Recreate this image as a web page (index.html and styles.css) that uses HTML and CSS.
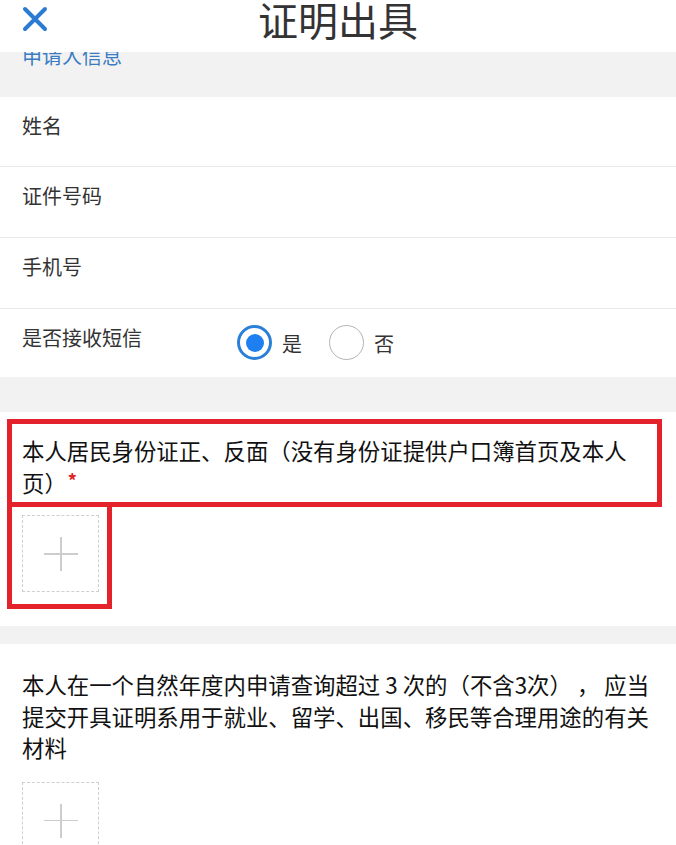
FILE: index.html
```html
<!DOCTYPE html>
<html lang="zh-CN">
<head>
    <meta charset="UTF-8">
    <meta name="viewport" content="width=device-width, initial-scale=1.0">
    <title>证明出具</title>
    <link rel="stylesheet" href="styles.css">
</head>
<body>
    <div class="header">
        <div class="close">
            <svg width="26" height="26" viewBox="0 0 26 26">
                <path d="M3 3 L23 23 M23 3 L3 23" stroke="#2b7bd3" stroke-width="4" stroke-linecap="round" fill="none"/>
            </svg>
        </div>
        <h1>证明出具</h1>
        <div></div>
    </div>

    <!-- Applicant info -->
    <div class="group-title">
        <span>申请人信息</span>
    </div>
    <div class="form-list">
        <div class="row"><span class="label">姓名</span></div>
        <div class="row"><span class="label">证件号码</span></div>
        <div class="row"><span class="label">手机号</span></div>
        <div class="row row-last">
            <span class="label">是否接收短信</span>
            <div class="radios">
                <span class="radio checked"></span><span class="radio-text">是</span>
                <span class="radio"></span><span class="radio-text">否</span>
            </div>
        </div>
    </div>

    <div class="gap gap-large"></div>

    <!-- ID card upload -->
    <div class="section">
        <p class="section-text">本人居民身份证正、反面（没有身份证提供户口簿首页及本人页）<span class="required">*</span></p>
        <div class="upload"><span class="plus"></span></div>
        <div class="mark mark-text"></div>
        <div class="mark mark-upload"></div>
    </div>

    <div class="gap"></div>

    <!-- Extra material -->
    <div class="section section-extra">
        <p class="section-text">本人在一个自然年度内申请查询超过 3 次的（不含3次）&nbsp;，&nbsp;应当提交开具证明系用于就业、留学、出国、移民等合理用途的有关材料</p>
        <div class="upload"><span class="plus"></span></div>
    </div>
</body>
</html>
```

FILE: styles.css
```css
/* Global Styles */
body {
    font-family: "Noto Sans CJK SC", "Noto Sans", sans-serif;
    margin: 0;
    padding: 0;
    background-color: #f2f2f2;
    color: #333;
    height: 845px;
    overflow: hidden;
}

/* Header */
.header {
    display: grid;
    grid-template-columns: 1fr auto 1fr;
    height: 52px;
    background-color: #fff;
}

.close {
    padding: 6px 0 0 22px;
}

.close svg {
    display: block;
}

.header h1 {
    margin: 0;
    font-size: 40px;
    font-weight: normal;
    line-height: 44px;
    color: #333;
    margin-top: -3px;
}

/* Group title, scrolled under the header */
.group-title {
    height: 45px;
    overflow: hidden;
    padding-left: 22px;
}

.group-title span {
    display: block;
    margin-top: -6px;
    font-size: 20px;
    line-height: 20px;
    color: #3a7cc2;
}

/* Form rows */
.form-list {
    background-color: #fff;
}

.row {
    display: flex;
    align-items: flex-start;
    height: 70px;
    border-bottom: 1px solid #e9e9e9;
    padding-left: 22px;
    box-sizing: border-box;
}

.row + .row {
    height: 71px;
}

.row.row-last {
    height: 68px;
    border-bottom: none;
}

.label {
    padding-top: 19px;
    width: 215px;
    font-size: 20px;
    line-height: 20px;
    color: #333;
}

.radios {
    display: flex;
    align-items: center;
    margin-top: 16px;
}

.radio {
    width: 35px;
    height: 35px;
    border: 1.5px solid #b4b4b4;
    border-radius: 50%;
    box-sizing: border-box;
    display: flex;
    align-items: center;
    justify-content: center;
}

.radio.checked {
    border: 3px solid #2a7fd8;
}

.radio.checked::after {
    content: "";
    width: 18px;
    height: 18px;
    border-radius: 50%;
    background-color: #1e80f0;
}

.radio-text {
    margin: 3px 27px 0 10px;
    font-size: 20px;
    line-height: 20px;
}

/* Gray spacers */
.gap {
    height: 18px;
}

.gap-large {
    height: 35px;
}

/* Upload sections */
.section {
    position: relative;
    background-color: #fff;
    padding: 23px 22px 34px 22px;
}

.section-extra {
    padding-top: 25px;
    height: 200px;
}

.section-text {
    margin: 0;
    font-size: 22.4px;
    line-height: 31.5px;
    color: #111;
}

.required {
    margin-left: 1px;
    color: #e02323;
    font-size: 18px;
    font-weight: bold;
    line-height: 18px;
    vertical-align: 4px;
}

.upload {
    position: relative;
    width: 77px;
    height: 77px;
    margin-top: 17px;
    border: 1px dashed #cfcfcf;
    box-sizing: border-box;
}

.section-extra .upload {
    margin-top: 18px;
}

.plus::before,
.plus::after {
    content: "";
    position: absolute;
    background-color: #cdcdcd;
}

.plus::before {
    left: 21px;
    top: 37px;
    width: 34px;
    height: 1.5px;
}

.plus::after {
    left: 37px;
    top: 21px;
    width: 1.5px;
    height: 34px;
}

/* Red highlight frames drawn over the page */
.mark {
    position: absolute;
    border: 5px solid #e3222b;
    box-sizing: border-box;
}

.mark-text {
    left: 7px;
    top: 7px;
    width: 655px;
    height: 88px;
}

.mark-upload {
    left: 7px;
    top: 90px;
    width: 105px;
    height: 107px;
}
```
